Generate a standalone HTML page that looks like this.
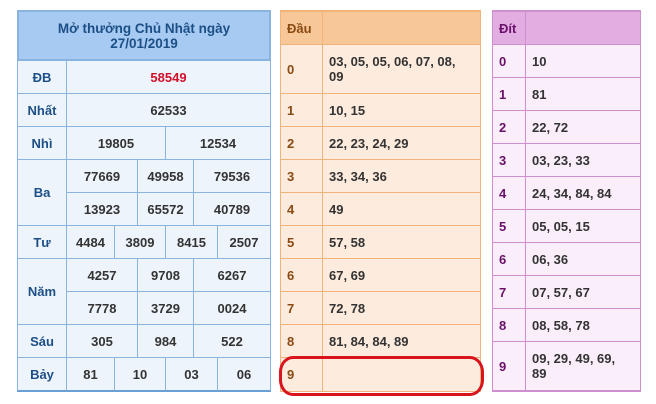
<!DOCTYPE html>
<html><head><meta charset="utf-8"><style>
*{margin:0;padding:0;box-sizing:border-box}
body{width:656px;height:404px;background:#fff;font-family:"Liberation Sans",Arial,sans-serif;font-weight:bold;font-size:13px;position:relative;overflow:hidden;color:#333}
.c{position:absolute;display:flex;align-items:center;justify-content:center;text-align:center;line-height:15px}
.b{border:1px solid #8ab4e0;background:#eef4fb}
.lb{color:#1c4f86}
.o{border:1px solid #f0b47a;background:#fdebdd;justify-content:flex-start;padding-left:6px;text-align:left}
.ol{color:#8a4a12}
.p{border:1px solid #cf8fcf;background:#fbeefb;justify-content:flex-start;padding-left:6px;text-align:left}
.pl{color:#6a106a}
</style></head><body>
<!-- Left table -->
<div class="c b" style="left:17px;top:10px;width:254px;height:51px;background:#a6caf2;color:#1c4f86;border:2px solid #8ab4e0;font-size:13.5px">Mở thưởng Chủ Nhật ngày<br>27/01/2019</div>
<div class="c b lb" style="left:17px;top:60px;width:50px;height:34px">ĐB</div>
<div class="c b" style="left:66px;top:60px;width:205px;height:34px;color:#d0102a">58549</div>
<div class="c b lb" style="left:17px;top:93px;width:50px;height:34px">Nhất</div>
<div class="c b" style="left:66px;top:93px;width:205px;height:34px">62533</div>
<div class="c b lb" style="left:17px;top:126px;width:50px;height:34px">Nhì</div>
<div class="c b" style="left:66px;top:126px;width:100px;height:34px">19805</div>
<div class="c b" style="left:165px;top:126px;width:106px;height:34px">12534</div>
<div class="c b lb" style="left:17px;top:159px;width:50px;height:67px">Ba</div>
<div class="c b" style="left:66px;top:159px;width:72px;height:34px">77669</div>
<div class="c b" style="left:137px;top:159px;width:57px;height:34px">49958</div>
<div class="c b" style="left:193px;top:159px;width:78px;height:34px">79536</div>
<div class="c b" style="left:66px;top:192px;width:72px;height:34px">13923</div>
<div class="c b" style="left:137px;top:192px;width:57px;height:34px">65572</div>
<div class="c b" style="left:193px;top:192px;width:78px;height:34px">40789</div>
<div class="c b lb" style="left:17px;top:225px;width:50px;height:34px">Tư</div>
<div class="c b" style="left:66px;top:225px;width:49px;height:34px">4484</div>
<div class="c b" style="left:114px;top:225px;width:52px;height:34px">3809</div>
<div class="c b" style="left:165px;top:225px;width:53px;height:34px">8415</div>
<div class="c b" style="left:217px;top:225px;width:54px;height:34px">2507</div>
<div class="c b lb" style="left:17px;top:258px;width:50px;height:67px">Năm</div>
<div class="c b" style="left:66px;top:258px;width:72px;height:34px">4257</div>
<div class="c b" style="left:137px;top:258px;width:57px;height:34px">9708</div>
<div class="c b" style="left:193px;top:258px;width:78px;height:34px">6267</div>
<div class="c b" style="left:66px;top:291px;width:72px;height:34px">7778</div>
<div class="c b" style="left:137px;top:291px;width:57px;height:34px">3729</div>
<div class="c b" style="left:193px;top:291px;width:78px;height:34px">0024</div>
<div class="c b lb" style="left:17px;top:324px;width:50px;height:34px">Sáu</div>
<div class="c b" style="left:66px;top:324px;width:72px;height:34px">305</div>
<div class="c b" style="left:137px;top:324px;width:57px;height:34px">984</div>
<div class="c b" style="left:193px;top:324px;width:78px;height:34px">522</div>
<div class="c b lb" style="left:17px;top:357px;width:50px;height:35px;border-bottom:2px solid #6a9fd6">Bảy</div>
<div class="c b" style="left:66px;top:357px;width:49px;height:35px;border-bottom:2px solid #6a9fd6">81</div>
<div class="c b" style="left:114px;top:357px;width:52px;height:35px;border-bottom:2px solid #6a9fd6">10</div>
<div class="c b" style="left:165px;top:357px;width:53px;height:35px;border-bottom:2px solid #6a9fd6">03</div>
<div class="c b" style="left:217px;top:357px;width:54px;height:35px;border-bottom:2px solid #6a9fd6">06</div>

<!-- Middle table -->
<div class="c o ol" style="left:280px;top:10px;width:43px;height:35px;background:#f7c797;border-top:2px solid #f0b47a">Đầu</div>
<div class="c o" style="left:322px;top:10px;width:159px;height:35px;background:#f7c797;border-top:2px solid #f0b47a"></div>
<div class="c o ol" style="left:280px;top:44px;width:43px;height:50px">0</div>
<div class="c o" style="left:322px;top:44px;width:159px;height:50px">03, 05, 05, 06, 07, 08,<br>09</div>
<div class="c o ol" style="left:280px;top:93px;width:43px;height:34px">1</div>
<div class="c o" style="left:322px;top:93px;width:159px;height:34px">10, 15</div>
<div class="c o ol" style="left:280px;top:126px;width:43px;height:34px">2</div>
<div class="c o" style="left:322px;top:126px;width:159px;height:34px">22, 23, 24, 29</div>
<div class="c o ol" style="left:280px;top:159px;width:43px;height:34px">3</div>
<div class="c o" style="left:322px;top:159px;width:159px;height:34px">33, 34, 36</div>
<div class="c o ol" style="left:280px;top:192px;width:43px;height:34px">4</div>
<div class="c o" style="left:322px;top:192px;width:159px;height:34px">49</div>
<div class="c o ol" style="left:280px;top:225px;width:43px;height:34px">5</div>
<div class="c o" style="left:322px;top:225px;width:159px;height:34px">57, 58</div>
<div class="c o ol" style="left:280px;top:258px;width:43px;height:34px">6</div>
<div class="c o" style="left:322px;top:258px;width:159px;height:34px">67, 69</div>
<div class="c o ol" style="left:280px;top:291px;width:43px;height:34px">7</div>
<div class="c o" style="left:322px;top:291px;width:159px;height:34px">72, 78</div>
<div class="c o ol" style="left:280px;top:324px;width:43px;height:34px">8</div>
<div class="c o" style="left:322px;top:324px;width:159px;height:34px">81, 84, 84, 89</div>
<div class="c o ol" style="left:280px;top:357px;width:43px;height:35px">9</div>
<div class="c o" style="left:322px;top:357px;width:159px;height:35px"></div>
<div style="position:absolute;left:279px;top:356px;width:205px;height:40px;border:3px solid #d8141c;border-radius:14px/16px"></div>

<!-- Right table -->
<div class="c p pl" style="left:492px;top:10px;width:34px;height:35px;background:#e2aee2;border-top:2px solid #cf8fcf">Đít</div>
<div class="c p" style="left:525px;top:10px;width:116px;height:35px;background:#e2aee2;border-top:2px solid #cf8fcf"></div>
<div class="c p pl" style="left:492px;top:44px;width:34px;height:34px">0</div>
<div class="c p" style="left:525px;top:44px;width:116px;height:34px">10</div>
<div class="c p pl" style="left:492px;top:77px;width:34px;height:34px">1</div>
<div class="c p" style="left:525px;top:77px;width:116px;height:34px">81</div>
<div class="c p pl" style="left:492px;top:110px;width:34px;height:34px">2</div>
<div class="c p" style="left:525px;top:110px;width:116px;height:34px">22, 72</div>
<div class="c p pl" style="left:492px;top:143px;width:34px;height:34px">3</div>
<div class="c p" style="left:525px;top:143px;width:116px;height:34px">03, 23, 33</div>
<div class="c p pl" style="left:492px;top:176px;width:34px;height:34px">4</div>
<div class="c p" style="left:525px;top:176px;width:116px;height:34px">24, 34, 84, 84</div>
<div class="c p pl" style="left:492px;top:209px;width:34px;height:34px">5</div>
<div class="c p" style="left:525px;top:209px;width:116px;height:34px">05, 05, 15</div>
<div class="c p pl" style="left:492px;top:242px;width:34px;height:34px">6</div>
<div class="c p" style="left:525px;top:242px;width:116px;height:34px">06, 36</div>
<div class="c p pl" style="left:492px;top:275px;width:34px;height:34px">7</div>
<div class="c p" style="left:525px;top:275px;width:116px;height:34px">07, 57, 67</div>
<div class="c p pl" style="left:492px;top:308px;width:34px;height:34px">8</div>
<div class="c p" style="left:525px;top:308px;width:116px;height:34px">08, 58, 78</div>
<div class="c p pl" style="left:492px;top:341px;width:34px;height:51px;border-bottom:2px solid #cf8fcf">9</div>
<div class="c p" style="left:525px;top:341px;width:116px;height:51px;border-bottom:2px solid #cf8fcf">09, 29, 49, 69,<br>89</div>
</body></html>
